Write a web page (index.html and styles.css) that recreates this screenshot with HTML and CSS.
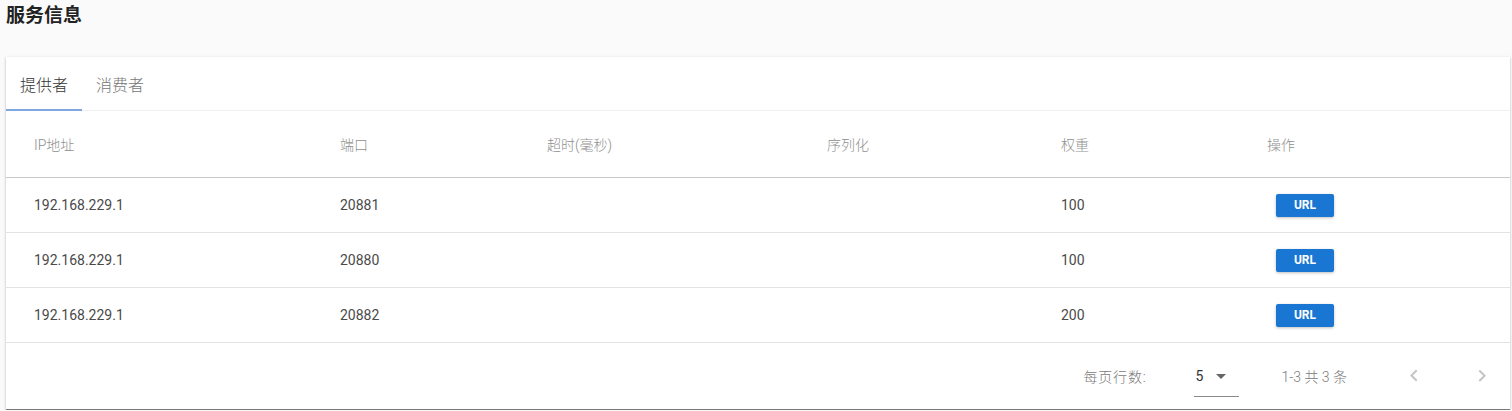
FILE: index.html
```html
<!DOCTYPE html>
<html lang="zh">
<head>
<meta charset="utf-8">
<title>服务信息</title>
<link rel="stylesheet" href="styles.css">
</head>
<body>
<div class="page">
  <h1 class="title">服务信息</h1>
  <div class="card">
    <div class="tabs">
      <div class="tab active">提供者</div>
      <div class="tab">消费者</div>
    </div>
    <div class="table">
      <div class="row head">
        <div class="cell">IP地址</div>
        <div class="cell">端口</div>
        <div class="cell">超时(毫秒)</div>
        <div class="cell">序列化</div>
        <div class="cell">权重</div>
        <div class="cell">操作</div>
      </div>
      <div class="row">
        <div class="cell">192.168.229.1</div>
        <div class="cell">20881</div>
        <div class="cell"></div>
        <div class="cell"></div>
        <div class="cell">100</div>
        <div class="cell"><button class="btn">URL</button></div>
      </div>
      <div class="row">
        <div class="cell">192.168.229.1</div>
        <div class="cell">20880</div>
        <div class="cell"></div>
        <div class="cell"></div>
        <div class="cell">100</div>
        <div class="cell"><button class="btn">URL</button></div>
      </div>
      <div class="row">
        <div class="cell">192.168.229.1</div>
        <div class="cell">20882</div>
        <div class="cell"></div>
        <div class="cell"></div>
        <div class="cell">200</div>
        <div class="cell"><button class="btn">URL</button></div>
      </div>
    </div>
    <div class="pager">
      <span class="caption">每页行数:</span>
      <div class="select">
        <span class="select-value">5</span>
        <svg class="caret" width="24" height="24" viewBox="0 0 24 24"><path d="M7 10l5 5 5-5z"/></svg>
      </div>
      <span class="caption range">1-3 共 3 条</span>
      <div class="nav">
        <svg class="chev" width="24" height="24" viewBox="0 0 24 24"><path d="M15.41 16.09l-4.58-4.59 4.58-4.59L14 5.5l-6 6 6 6z"/></svg>
        <svg class="chev" width="24" height="24" viewBox="0 0 24 24"><path d="M8.59 16.34l4.58-4.59-4.58-4.59L10 5.75l6 6-6 6z"/></svg>
      </div>
    </div>
  </div>
</div>
</body>
</html>
```
FILE: styles.css
```css
*, *::before, *::after {
  box-sizing: border-box;
}

html, body {
  margin: 0;
  padding: 0;
  background: #fafafa;
  font-family: Roboto, "Noto Sans CJK SC", sans-serif;
  color: rgba(0, 0, 0, 0.87);
}

.page {
  padding: 0 2px 0 6px;
}

.title {
  margin: 0;
  height: 57px;
  line-height: 32px;
  font-size: 19px;
  font-weight: 700;
  color: #222;
}

.card {
  background: #fff;
  height: 353px;
  box-shadow: 0 1px 3px rgba(0, 0, 0, 0.2), 0 1px 1px rgba(0, 0, 0, 0.14), 0 2px 1px -1px rgba(0, 0, 0, 0.12);
  border-bottom: 1px solid #777;
  display: flex;
  flex-direction: column;
}

.tabs {
  display: flex;
  height: 54px;
  border-bottom: 1px solid #f0f0f0;
}

.tab {
  padding: 4px 14px 0;
  font-size: 16px;
  line-height: 49px;
  color: #777;
  font-weight: 300;
}

.tab.active {
  color: #333;
  border-bottom: 2px solid #7ea6e0;
  height: 54px;
}

.row {
  display: grid;
  grid-template-columns: 306px 207px 280px 234px 206px 1fr;
  padding-left: 28px;
  height: 55px;
  align-items: center;
  border-bottom: 1px solid #e3e3e3;
  font-size: 14px;
  color: #4a4a4a;
}

.row.head {
  height: 67px;
  padding-bottom: 1px;
  border-bottom: 1px solid #c8c8c8;
  color: #8f8f8f;
  font-weight: 300;
}

.cell {
  white-space: nowrap;
}

.btn {
  margin-left: 9px;
  width: 58px;
  height: 23px;
  border: 0;
  border-radius: 2px;
  background: #1976d2;
  color: #fff;
  font-family: Roboto, sans-serif;
  font-size: 12px;
  font-weight: 700;
  padding: 0;
  box-shadow: 0 1px 3px rgba(0, 0, 0, 0.25);
}

.pager {
  flex: 1;
  display: flex;
  align-items: center;
  justify-content: flex-end;
  padding: 0 16px 0 0;
  font-size: 14px;
  color: #7a7a7a;
  font-weight: 300;
}

.caption {
  white-space: nowrap;
}

.caption:first-child {
  letter-spacing: 0.8px;
}

.select {
  margin-left: 48px;
  width: 45px;
  height: 36px;
  border-bottom: 1px solid #8a8a8a;
  display: flex;
  align-items: center;
  margin-top: 5px;
  padding-bottom: 4px;
}

.select-value {
  margin-left: 1px;
  font-size: 14px;
  color: #333;
  font-weight: 400;
}

.caret {
  fill: #666;
  margin-left: 6px;
}

.range {
  margin-left: 42px;
}

.nav {
  margin-left: 55px;
  display: flex;
  gap: 44px;
}

.chev {
  fill: #c4c4c4;
}
```
